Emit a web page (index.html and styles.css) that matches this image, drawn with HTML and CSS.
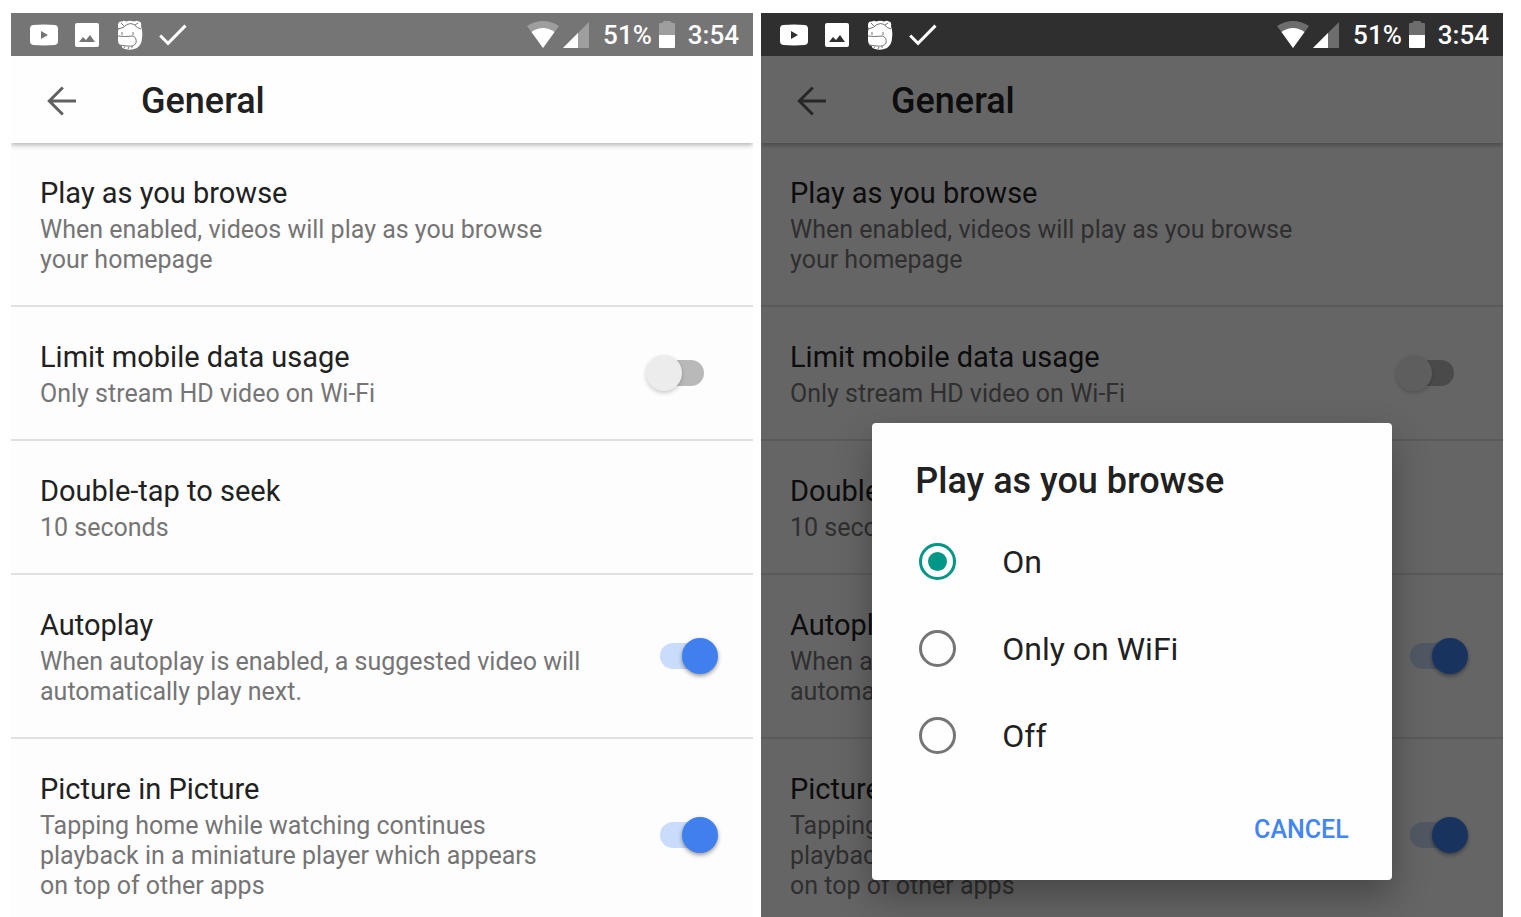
FILE: index.html
```
<!DOCTYPE html>
<html lang="en">
<head>
    <meta charset="UTF-8">
    <meta name="viewport" content="width=device-width, initial-scale=1.0">
    <title>General</title>
    <link rel="stylesheet" href="styles.css">
</head>
<body>
    <!-- Shared icons -->
    <svg class="sprite" aria-hidden="true">
        <symbol id="icon-youtube" viewBox="0 0 30 30">
            <path fill="currentColor" fill-rule="evenodd" d="M4 5Q15 4.200 26 5Q28.600 5.200 29 8V22Q28.600 24.800 26 25Q15 25.800 4 25Q1.400 24.800 1 22V8Q1.400 5.200 4 5ZM12 11V19L19 15Z"/>
        </symbol>
        <symbol id="icon-image" viewBox="0 0 24 24">
            <path fill="currentColor" fill-rule="evenodd" d="M2 0H22Q24 0 24 2V22Q24 24 22 24H2Q0 24 0 22V2Q0 0 2 0ZM4 19H20L15 12L11 17L8 14Z"/>
        </symbol>
        <symbol id="icon-face" viewBox="0 0 26 30">
            <path fill="currentColor" d="M1 5Q1 1 5 1.500Q7 0 9 1.500Q13 0 17 1.500Q20 0 22 1.500Q25 2 24 6Q26 12 25 18Q25 24 20 28Q14 31 8 29Q4 28 5 26Q1 25 1 20V11Q2 9 1 7Z"/>
            <path class="face-lines" d="M1 9Q7 8 10 4.500Q14 2.500 17 4.500Q20 8 24 9M4 3L7 6M21 3L18 5M5 12V15M16 12V15M1 16Q7 17 16 16Q20 18 19 23Q17 27 10 26L2 25M7 28L8 26.500M11 29L12 27M15 28V26"/>
        </symbol>
        <symbol id="icon-check" viewBox="0 0 28 22">
            <path fill="none" stroke="currentColor" stroke-width="3" d="M1.200 11.500L9 19.300L26.500 1.600"/>
        </symbol>
        <symbol id="icon-wifi" viewBox="0 0 32 27">
            <path fill="currentColor" opacity=".3" d="M0 5Q16 -5 32 5L16 27Z"/>
            <path fill="currentColor" d="M4.500 11Q16 3 27.500 11L16 27Z"/>
        </symbol>
        <symbol id="icon-signal" viewBox="0 0 26 26">
            <path fill="currentColor" opacity=".3" d="M26 0V26H0Z"/>
            <path fill="currentColor" d="M15 11V26H0Z"/>
        </symbol>
        <symbol id="icon-battery" viewBox="0 0 16 27">
            <path fill="currentColor" opacity=".3" d="M5 0H11L13 2H15Q16 2 16 3V14H0V3Q0 2 1 2H3Z"/>
            <path fill="currentColor" d="M0 14H16V26Q16 27 15 27H1Q0 27 0 26Z"/>
        </symbol>
        <symbol id="icon-back" viewBox="0 0 30 30">
            <path fill="none" stroke="currentColor" stroke-width="3" d="M29 15H3M15.800 1.500L2.300 15L15.800 28.500"/>
        </symbol>
    </svg>

    <main class="phone">
        <div class="status-bar">
            <svg class="icon-youtube"><use href="#icon-youtube"/></svg>
            <svg class="icon-image"><use href="#icon-image"/></svg>
            <svg class="icon-face"><use href="#icon-face"/></svg>
            <svg class="icon-check"><use href="#icon-check"/></svg>
            <div class="status-right">
                <svg class="icon-wifi"><use href="#icon-wifi"/></svg>
                <svg class="icon-signal"><use href="#icon-signal"/></svg>
                <span class="percent">51%</span>
                <svg class="icon-battery"><use href="#icon-battery"/></svg>
                <span class="clock">3:54</span>
            </div>
        </div>
        <div class="screen">
            <header class="toolbar">
                <button class="back-btn" aria-label="Back"><svg><use href="#icon-back"/></svg></button>
                <h1>General</h1>
            </header>
            <div class="settings">
                <div class="row">
                    <div class="text">
                        <h2>Play as you browse</h2>
                        <p>When enabled, videos will play as you browse<br>your homepage</p>
                    </div>
                </div>
                <label class="row">
                    <span class="text">
                        <span class="name">Limit mobile data usage</span>
                        <span class="summary">Only stream HD video on Wi-Fi</span>
                    </span>
                    <input class="switch" type="checkbox">
                </label>
                <div class="row">
                    <div class="text">
                        <h2>Double-tap to seek</h2>
                        <p>10 seconds</p>
                    </div>
                </div>
                <label class="row">
                    <span class="text">
                        <span class="name">Autoplay</span>
                        <span class="summary">When autoplay is enabled, a suggested video will<br>automatically play next.</span>
                    </span>
                    <input class="switch" type="checkbox" checked>
                </label>
                <label class="row">
                    <span class="text">
                        <span class="name">Picture in Picture</span>
                        <span class="summary">Tapping home while watching continues<br>playback in a miniature player which appears<br>on top of other apps</span>
                    </span>
                    <input class="switch" type="checkbox" checked>
                </label>
            </div>
        </div>
    </main>

    <section class="phone dimmed">
        <div class="status-bar">
            <svg class="icon-youtube"><use href="#icon-youtube"/></svg>
            <svg class="icon-image"><use href="#icon-image"/></svg>
            <svg class="icon-face"><use href="#icon-face"/></svg>
            <svg class="icon-check"><use href="#icon-check"/></svg>
            <div class="status-right">
                <svg class="icon-wifi"><use href="#icon-wifi"/></svg>
                <svg class="icon-signal"><use href="#icon-signal"/></svg>
                <span class="percent">51%</span>
                <svg class="icon-battery"><use href="#icon-battery"/></svg>
                <span class="clock">3:54</span>
            </div>
        </div>
        <div class="screen">
            <header class="toolbar">
                <button class="back-btn" aria-label="Back"><svg><use href="#icon-back"/></svg></button>
                <h1>General</h1>
            </header>
            <div class="settings">
                <div class="row">
                    <div class="text">
                        <h2>Play as you browse</h2>
                        <p>When enabled, videos will play as you browse<br>your homepage</p>
                    </div>
                </div>
                <label class="row">
                    <span class="text">
                        <span class="name">Limit mobile data usage</span>
                        <span class="summary">Only stream HD video on Wi-Fi</span>
                    </span>
                    <input class="switch" type="checkbox">
                </label>
                <div class="row">
                    <div class="text">
                        <h2>Double-tap to seek</h2>
                        <p>10 seconds</p>
                    </div>
                </div>
                <label class="row">
                    <span class="text">
                        <span class="name">Autoplay</span>
                        <span class="summary">When autoplay is enabled, a suggested video will<br>automatically play next.</span>
                    </span>
                    <input class="switch" type="checkbox" checked>
                </label>
                <label class="row">
                    <span class="text">
                        <span class="name">Picture in Picture</span>
                        <span class="summary">Tapping home while watching continues<br>playback in a miniature player which appears<br>on top of other apps</span>
                    </span>
                    <input class="switch" type="checkbox" checked>
                </label>
            </div>
            <div class="scrim"></div>
        </div>

        <div class="dialog" role="dialog" aria-labelledby="dialog-title">
            <h2 id="dialog-title">Play as you browse</h2>
            <label class="option"><input type="radio" name="browse" checked>On</label>
            <label class="option"><input type="radio" name="browse">Only on WiFi</label>
            <label class="option"><input type="radio" name="browse">Off</label>
            <div class="actions">
                <button class="cancel-btn">CANCEL</button>
            </div>
        </div>
    </section>
</body>
</html>
```
FILE: styles.css
```
* {
    margin: 0;
    padding: 0;
    box-sizing: border-box;
}

body {
    height: 100vh;
    padding: 13px 18px 0 11px;
    display: flex;
    gap: 8px;
    background: #fff;
    font-family: Roboto, sans-serif;
    color: #212121;
    overflow: hidden;
}

button {
    border: none;
    background: none;
    font-family: inherit;
    cursor: pointer;
}

svg {
    display: block;
    flex-shrink: 0;
}

.sprite {
    position: absolute;
    width: 0;
    height: 0;
}

.phone {
    flex: 1;
    min-width: 0;
    position: relative;
    display: flex;
    flex-direction: column;
}

/* Status bar */
.status-bar {
    height: 43px;
    flex-shrink: 0;
    display: flex;
    align-items: center;
    gap: 16px;
    padding: 0 14px 0 18px;
    background: #757575;
    color: #fff;
    font-size: 26px;
    font-weight: 500;
}

.dimmed .status-bar {
    background: #2f2f2f;
}

.status-right {
    margin-left: auto;
    display: flex;
    align-items: center;
}

.icon-youtube {
    width: 30px;
    height: 30px;
}

.icon-image {
    width: 24px;
    height: 24px;
}

.icon-face {
    width: 26px;
    height: 30px;
    margin-left: 2px;
}

.face-lines {
    fill: none;
    stroke: #757575;
    stroke-width: 1;
}

.icon-check {
    width: 28px;
    height: 22px;
}

.icon-wifi {
    width: 32px;
    height: 27px;
    margin-right: 4px;
}

.icon-signal {
    width: 26px;
    height: 26px;
    margin-right: 14px;
}

.icon-battery {
    width: 16px;
    height: 27px;
    margin: 0 13px 0 7px;
}

/* Settings screen */
.screen {
    flex: 1;
    min-height: 0;
    position: relative;
    overflow: hidden;
    background: #fdfdfd;
}

.toolbar {
    height: 87px;
    position: relative;
    display: flex;
    align-items: center;
    gap: 64px;
    padding: 2px 36px 0;
    background: #fefefe;
    box-shadow: 0 2px 5px rgba(0, 0, 0, 0.3);
}

.back-btn {
    width: 30px;
    height: 30px;
    color: #616161;
}

.back-btn svg {
    width: 30px;
    height: 30px;
}

.toolbar h1 {
    font-size: 36px;
    font-weight: 500;
    line-height: 42px;
}

.row {
    display: flex;
    align-items: center;
    justify-content: space-between;
    padding: 29px 35px 30px 29px;
    border-bottom: 2px solid #e0e0e0;
}

.text {
    padding-top: 4px;
}

.text h2,
.name {
    display: block;
    margin-bottom: 5px;
    font-size: 29px;
    font-weight: 400;
    line-height: 34px;
}

.text p,
.summary {
    display: block;
    font-size: 25px;
    line-height: 30px;
    color: #757575;
}

/* Switches */
.switch {
    appearance: none;
    width: 72px;
    height: 36px;
    flex-shrink: 0;
    display: grid;
    align-items: center;
    cursor: pointer;
}

.switch::before,
.switch::after {
    content: '';
    grid-area: 1 / 1;
}

.switch::before {
    height: 26px;
    margin: 0 14px;
    border-radius: 13px;
    background: #b9b9b9;
}

.switch::after {
    width: 36px;
    height: 36px;
    border-radius: 50%;
    background: #ececec;
    box-shadow: 0 2px 4px rgba(0, 0, 0, 0.2);
}

.switch:checked::before {
    background: #c9dcfb;
}

.switch:checked::after {
    justify-self: end;
    background: #4080ee;
    box-shadow: 0 2px 4px rgba(0, 0, 0, 0.4);
}

/* Dialog */
.scrim {
    position: absolute;
    inset: 0;
    background: rgba(0, 0, 0, 0.6);
}

.dialog {
    position: absolute;
    top: 410px;
    left: 15%;
    width: 70%;
    padding: 37px 43px 30px;
    border-radius: 4px;
    background: #fefefe;
    box-shadow: 0 16px 36px rgba(0, 0, 0, 0.3);
}

.dialog h2 {
    margin-bottom: 16px;
    font-size: 36px;
    font-weight: 500;
    line-height: 42px;
}

.option {
    height: 87px;
    display: flex;
    align-items: center;
    gap: 46px;
    padding-left: 4px;
    font-size: 32px;
    cursor: pointer;
}

.option input {
    appearance: none;
    width: 37px;
    height: 37px;
    display: grid;
    place-items: center;
    border: 3px solid #757575;
    border-radius: 50%;
}

.option input:checked {
    border-color: #009688;
}

.option input:checked::before {
    content: '';
    width: 19px;
    height: 19px;
    border-radius: 50%;
    background: #009688;
}

.actions {
    display: flex;
    justify-content: flex-end;
    padding-top: 31px;
}

.cancel-btn {
    font-size: 25px;
    font-weight: 500;
    line-height: 40px;
    color: #4285f4;
}
```
